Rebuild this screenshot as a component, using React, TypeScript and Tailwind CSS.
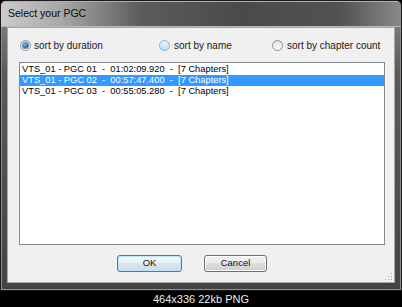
import React from 'react'

const rows = [
    'VTS_01 - PGC 01  -  01:02:09.920  -  [7 Chapters]',
    'VTS_01 - PGC 02  -  00:57:47.400  -  [7 Chapters]',
    'VTS_01 - PGC 03  -  00:55:05.280  -  [7 Chapters]',
]

const Radio = ({ checked, hot }: { checked?: boolean; hot?: boolean }) => (
    <span
        className={`flex h-[11px] w-[11px] shrink-0 items-center justify-center rounded-full border ${
            hot ? 'border-[#7fb2d8] bg-[linear-gradient(180deg,#e6f4fc,#bfe0f4)]' : 'border-[#8f8f8f] bg-[linear-gradient(180deg,#e2e2e2,#fbfbfb)]'
        }`}
    >
        {checked && (
            <span className="h-[5px] w-[5px] rounded-full bg-[radial-gradient(circle_at_40%_35%,#8ec6ee,#1f5f94_60%,#173f66)] shadow-[0_0_0_1px_#5d8fb8]" />
        )}
    </span>
)

const Grip = () => (
    <svg width="8" height="8" viewBox="0 0 8 8">
        {[
            [6, 0],
            [3, 3],
            [6, 3],
            [0, 6],
            [3, 6],
            [6, 6],
        ].map(([x, y], i) => (
            <g key={i}>
                <rect x={x + 1} y={y + 1} width="1" height="1" fill="#ffffff" />
                <rect x={x} y={y} width="1" height="1" fill="#a0a0a0" />
            </g>
        ))}
    </svg>
)

export default function App() {
    return (
        <div className="flex h-[307px] w-[402px] flex-col bg-black font-['Liberation_Sans',Arial,sans-serif]">
            {/* window */}
            <div className="flex h-[292px] flex-col overflow-hidden rounded-t-[6px] border border-[#1a1a1a] bg-[linear-gradient(180deg,#8a8a8a_0%,#5a5a5a_25%,#444444_100%)] shadow-[inset_0_0_0_1px_#8c8c8c]">
                <div className="flex h-[26px] shrink-0 items-center bg-[linear-gradient(90deg,#cbcbcb_0%,#a8a8a8_15%,#5c5c5c_35%,#4a4a4a_60%,#525252_85%,#8a8a8a_100%)] pl-[7px] shadow-[inset_0_1px_0_#b0b0b0,inset_0_-1px_0_#b8b8b8]">
                    <span className="text-[10.5px] text-[#0a0a0a]">Select your PGC</span>
                </div>
                <div className="flex flex-1 flex-col px-[6px] pb-[7px]">
                    <div className="flex flex-1 flex-col border border-[#a8a8a8] bg-[#f0f0f0]">
                        {/* radio options */}
                        <div className="mt-[10px] flex h-[14px] items-center pl-[12px] text-[10px] text-[#1a1a1a]">
                            <label className="flex w-[139px] items-center gap-[3px]">
                                <Radio checked />
                                <span>sort by duration</span>
                            </label>
                            <label className="flex w-[113px] items-center gap-[4px]">
                                <Radio hot />
                                <span>sort by name</span>
                            </label>
                            <label className="flex items-center gap-[4px]">
                                <Radio />
                                <span>sort by chapter count</span>
                            </label>
                        </div>

                        {/* list */}
                        <div className="ml-[11px] mr-[9px] mt-[10px] h-[183px] border border-[#828790] bg-white pt-[1px]">
                            {rows.map((r, i) => (
                                <div
                                    key={r}
                                    className={`flex h-[11px] items-center whitespace-pre pl-[2px] text-[9.3px] leading-none ${
                                        i === 1 ? 'bg-[#3399ff] text-white' : 'text-black'
                                    }`}
                                >
                                    {r}
                                </div>
                            ))}
                        </div>

                        {/* buttons */}
                        <div className="ml-[109px] mt-[10px] flex h-[17px] gap-[22px] text-[9.5px] text-[#111]">
                            <button className="w-[65px] rounded-[3px] border border-[#3c7fb1] bg-[linear-gradient(180deg,#f4f8fb_0%,#e9eff4_50%,#d8e4ee_50%,#cfdce8_100%)] shadow-[inset_0_0_0_1px_#bde4f8]">
                                OK
                            </button>
                            <button className="w-[63px] rounded-[3px] border border-[#707070] bg-[linear-gradient(180deg,#f2f2f2_0%,#ebebeb_50%,#dddddd_50%,#cfcfcf_100%)] shadow-[inset_0_0_0_1px_#fcfcfc]">
                                Cancel
                            </button>
                        </div>

                        <div className="mt-auto flex justify-end pb-[1px] pr-[1px]">
                            <Grip />
                        </div>
                    </div>
                </div>
            </div>

            {/* caption */}
            <div className="flex flex-1 items-center justify-center text-[11px] text-[#ececec]">
                464x336 22kb PNG
            </div>
        </div>
    )
}
